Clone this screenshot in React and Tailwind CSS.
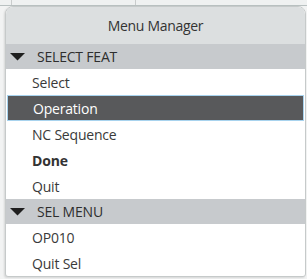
import React from "react";

const Caret = () => (
  <svg width="15" height="8" viewBox="0 0 15 8" className="shrink-0">
    <path d="M0 0 H15 L7.5 7.5 Z" fill="#1f1f1f" />
  </svg>
);

const sections = [
  {
    title: "SELECT FEAT",
    items: [
      { label: "Select" },
      { label: "Operation", active: true },
      { label: "NC Sequence" },
      { label: "Done", bold: true },
      { label: "Quit" },
    ],
  },
  {
    title: "SEL MENU",
    items: [{ label: "OP010" }, { label: "Quit Sel" }],
  },
];

const App = () => {
  return (
    <div className="w-[307px] h-[279px] bg-[#f2f3f3] font-['Open_Sans','Noto_Sans',sans-serif] text-[14px] text-[#3a3a3a] overflow-hidden">
      <div className="flex h-[6px] bg-[#eff1f1] border-b border-[#b9c1c1]">
        <div className="w-[12px] border-r border-[#c9cccc]" />
        <div className="w-[124px] border-r border-[#c9cccc]" />
      </div>
      <div className="pl-[5px] pr-[1px]">
        <div className="rounded-t-[8px] rounded-b-[3px] border border-[#c6caca] bg-white overflow-hidden shadow-[-1px_1px_2px_rgba(0,0,0,0.12)]">
          <div className="h-[37px] bg-[#dcdfe0] flex items-center justify-center tracking-[-0.3px] text-[#333]">
            Menu Manager
          </div>
          {sections.map((section) => (
            <div key={section.title}>
              <div className="h-[25px] bg-[#c7cacd] flex items-center pl-[4px] gap-[12px] text-[#2e2e2e] tracking-[-0.2px]">
                <Caret />
                <span>{section.title}</span>
              </div>
              <ul>
                {section.items.map((item) => (
                  <li
                    key={item.label}
                    className={
                      item.active
                        ? "h-[26px] flex items-center pl-[25px] mx-[1px] bg-[#58595b] text-white border border-[#a8d3ee] tracking-[-0.2px]"
                        : "h-[26px] flex items-center pl-[26px] tracking-[-0.2px]" +
                          (item.bold ? " font-bold text-[#333]" : "")
                    }
                  >
                    {item.label}
                  </li>
                ))}
              </ul>
            </div>
          ))}
        </div>
      </div>
    </div>
  );
};

export default App;
